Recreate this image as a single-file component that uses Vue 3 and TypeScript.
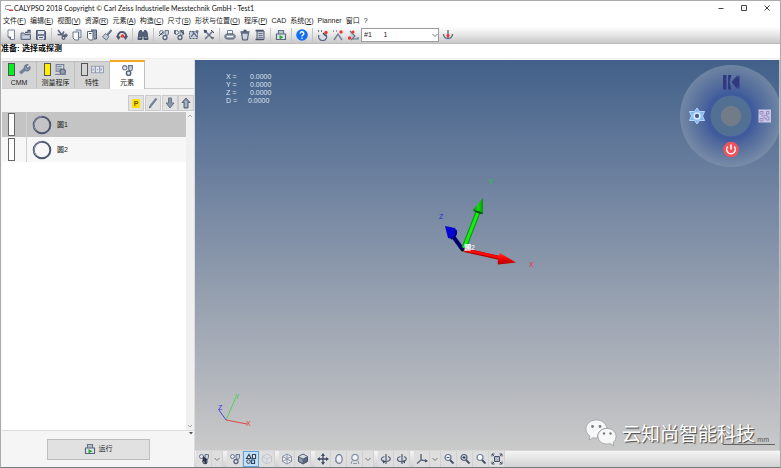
<script setup lang="ts">
import { ref } from 'vue'

interface MenuEntry {
  label: string
  key?: string
}

interface Tool {
  icon: string
  label: string
}

const menus: MenuEntry[] = [
  { label: '文件', key: 'F' },
  { label: '编辑', key: 'E' },
  { label: '视图', key: 'V' },
  { label: '资源', key: 'R' },
  { label: '元素', key: 'A' },
  { label: '构造', key: 'C' },
  { label: '尺寸', key: 'S' },
  { label: '形状与位置', key: 'O' },
  { label: '程序', key: 'P' },
  { label: 'CAD' },
  { label: '系统', key: 'X' },
  { label: 'Planner' },
  { label: '窗口' },
  { label: '?' },
]

const cluster =
  '<circle cx="3.5" cy="3.5" r="2" fill="#e4e8ee" stroke="#69758c"/><path d="M7 1.5h3.500v3a1.750 1.750 0 0 1-3.500 0z" fill="#c9d0db" stroke="#69758c"/><circle cx="7" cy="8.500" r="2" fill="#e4e8ee" stroke="#59657d" stroke-width="1.300"/>'

const icons: Record<string, string> = {
  page: '<path d="M3 1h6.500v9.500H5.500L3 8z" fill="#fafbfc" stroke="#7c869a"/><path d="M3 8h2.500v2.500" fill="#9aa4b5" stroke="#5c677e"/>',
  open: '<path d="M1 4h3l1 1.500h5.500v5H1z" fill="#aeb8c7" stroke="#5f6b82"/><path d="M5 3.500h3V1.500h2v3" fill="none" stroke="#4c5870" stroke-width="1.300"/><path d="M3 8h6" stroke="#eef1f5"/>',
  save: '<path d="M1.500 1.500h8l1 1v8h-9z" fill="#73809a" stroke="#4c5870"/><path d="M3 2h6v3H3zM3 7h6v3.500H3z" fill="#e3e7ed"/><path d="M4 8.500h4" stroke="#4c5870"/>',
  cut: '<path d="M2 1l4 5 5 1M1.500 5.500L6 6l2-3.500" fill="none" stroke="#5c6880" stroke-width="1.600"/><circle cx="7.500" cy="8.800" r="1.500" fill="none" stroke="#4c5870" stroke-width="1.200"/><circle cx="10" cy="6.200" r="1.200" fill="none" stroke="#4c5870"/>',
  copy: '<path d="M4.500 1h5.500v7.500H8" fill="#d8dde5" stroke="#75819a"/><path d="M2 3h5.500v8H4L2 9z" fill="#fafbfc" stroke="#6a768d"/>',
  paste: '<path d="M5 1h5.500v9H8" fill="#8d98ac" stroke="#4c5870"/><path d="M1.500 2.500H7V11H3.500l-2-2z" fill="#fafbfc" stroke="#59657d"/><path d="M3 4.500h2.500" stroke="#4c5870"/>',
  brush: '<path d="M10.500 1L6 6.500" stroke="#69758c" stroke-width="2"/><path d="M4.500 4.500l3.500 3-2.500 3.500L1.500 8z" fill="#c4cbd7" stroke="#69758c"/>',
  undo: '<path d="M2 9A4.300 4.300 0 1 1 10 9" fill="none" stroke="#4c5870" stroke-width="2"/><path d="M0 7l2.500 4L5 7.500z" fill="#4c5870"/><path d="M7 7.500L9.500 11 12 7z" fill="#4c5870"/><circle cx="6.500" cy="7" r="1.800" fill="#ef3434"/>',
  find: '<path d="M2 3l1-1.500h1.500L5.500 4h1l1-2.500H9L10 3l1 7.500H7V7H5v3.500H1z" fill="#56627c" stroke="#46526a"/><path d="M2.500 8.500h1.500M8 8.500h1.500" stroke="#aeb8c7"/>',
  probe: cluster + '<path d="M1 7l4-4" stroke="#46526a"/>',
  probe2: cluster + '<path d="M8 2l3 3M2 1v4" stroke="#3f4b64" stroke-width="1.300"/>',
  pattern: '<path d="M1.500 2.500h8v7h-8z" fill="#c9d0db" stroke="#59657d" stroke-dasharray="2 1"/><path d="M3 8l3-4 3 4M4 2l5 6" fill="none" stroke="#59657d" stroke-width="1.100"/><circle cx="9" cy="2.500" r="1.500" fill="#69758c"/>',
  wrench: '<path d="M2 2l8 8M10 2L2 10" stroke="#69758c" stroke-width="1.600"/><path d="M1 1l3 1-2 2zM8 1l3 3M8.500 8.500L11 9" stroke="#46526a" fill="#46526a"/>',
  print: '<path d="M3.500 1.500h5V5h-5z" fill="#f5f7f9" stroke="#75819a"/><path d="M2.500 5h7l1.500 1.500v2L9.500 10h-7L1 8.500v-2z" fill="#919caf" stroke="#4c5870"/><path d="M3 7.500h6" stroke="#f5f7f9" stroke-width="1.300"/>',
  bin: '<path d="M2.500 4h7l-1 7h-5z" fill="#aeb8c7" stroke="#4c5870"/><path d="M1.500 3h9M4.500 1.500h3" stroke="#4c5870" stroke-width="1.400"/><path d="M5 5v4.500M7 5v4.500" stroke="#f0f2f5"/>',
  scroll: '<path d="M3 2h7v8.500H3z" fill="#c4cbd7" stroke="#4c5870"/><path d="M1.500 1.500h8M1.500 10.500h8" stroke="#46526a" stroke-width="1.300"/><path d="M4.500 4.500h4M4.500 6.500h4M4.500 8.500h4" stroke="#69758c"/>',
  run: '<path d="M3.500 5V1.500h5V5" fill="none" stroke="#69758c" stroke-width="1.200"/><path d="M5 2v3M7 2v3" stroke="#919caf"/><path d="M1.500 5h9v5.500h-9z" fill="#e3e7ed" stroke="#59657d" stroke-width="1.200"/><path d="M4.500 6l4 2.300-4 2.300z" fill="#24a83a"/>',
  help: '<circle cx="6" cy="6" r="5.800" fill="#146ff0"/><path d="M4.200 4.600a1.800 1.800 0 1 1 2.600 1.600q-.8.400-.8 1.200" fill="none" stroke="#fff" stroke-width="1.400"/><circle cx="6" cy="9.200" r=".8" fill="#fff"/>',
  axisA: '<path d="M2 6a4 4 0 1 0 7-.500" fill="#d9dee6" stroke="#59657d" stroke-width="1.200"/><path d="M1 2h1M4 2h1M6 4l3 3" stroke="#3f4b64" stroke-width="1.600"/><circle cx="9" cy="3.500" r="1.700" fill="#ef3434"/>',
  axisB: '<path d="M2 11l4-6 4 6M1 2h1M4 2h1" fill="none" stroke="#75819a" stroke-width="1.500"/><circle cx="9" cy="3" r="1.700" fill="#ef3434"/>',
  axisC: '<path d="M3 2l5 5-4 4M5 10h6V8" fill="#c4cbd7" stroke="#69758c" stroke-width="1.200"/><circle cx="6" cy="3" r="1.500" fill="#ef3434"/><circle cx="2.500" cy="9" r="1.700" fill="#ef3434"/>',
  touch: '<path d="M1.500 5a4.500 4.500 0 0 0 9 0M6 1v8" fill="none" stroke="#69758c" stroke-width="1.500"/><circle cx="6" cy="6.500" r="1.600" fill="#ef3434"/>',
  spanner: '<path d="M2 9.500L6.500 5.500" stroke="#75819a" stroke-width="3"/><path d="M6 5.500a3 3 0 0 1 3-4L7.500 3.500 9 5l2-1.500a3 3 0 0 1-4 3.500z" fill="#919caf" stroke="#69758c"/>',
  plan: '<path d="M2 1.500h7v6H2z" fill="#d9dee6" stroke="#75819a"/><path d="M3 3.500h4M3 5.500h4" stroke="#69758c"/><circle cx="8" cy="8" r="2.500" fill="#919caf" stroke="#59657d"/><path d="M1 10.500h10" stroke="#75819a"/>',
  traits: '<path d="M.5 3h11v6H.5z" fill="#e3e7ed" stroke="#9aa4b5"/><path d="M4 3v6M8 3v6M2 5v2M5.500 6h1M9.500 5v2" stroke="#8b96aa"/>',
  cluster,
  pick: cluster + '<path d="M5 3l5 4-2 .5 1 3-2 .5-1-3-1.500 1z" fill="#29344e"/>',
  marks: '<path d="M1.500 5.500L4 1.500l2 4zM7.500 1.500h3v4h-3z" fill="#f4f7fa" stroke="#344561" stroke-width="1.200"/><circle cx="3.500" cy="8.500" r="1.800" fill="none" stroke="#344561"/><path d="M6.500 7h3v3.500h-3z" fill="none" stroke="#344561" stroke-width="1.200"/>',
  ghost: '<path d="M6 1l4.500 2.500v5L6 11 1.500 8.500v-5zM1.500 3.500L6 6l4.500-2.500M6 6v5" fill="#dfe1e4" stroke="#c2c6cc"/>',
  wire: '<path d="M6 1l4.500 2.500v5L6 11 1.500 8.500v-5zM1.500 3.500L6 6l4.500-2.500M6 6v5M6 1v5M1.500 8.500L6 6l4.500 2.500" fill="#eef0f3" stroke="#8b96aa"/>',
  cube: '<path d="M6 1l4.500 2.500v5L6 11 1.500 8.500v-5z" fill="#58657e" stroke="#46526a"/><path d="M6 1.500L10 3.500 6 5.500 2 3.500z" fill="#d5dae3"/><path d="M2 4.500l3.500 2v3.500L2 8z" fill="#8f9aae"/>',
  move: '<path d="M6 1v10M1 6h10" stroke="#3f4b64" stroke-width="1.300"/><path d="M6 0L4 3h4zM6 12L4 9h4zM0 6l3-2v4zM12 6L9 4v4z" fill="#3f4b64"/>',
  rotate: '<ellipse cx="6" cy="6" rx="3.200" ry="4.500" fill="#f0f2f5" stroke="#75819a" stroke-width="1.300"/><path d="M2 8q3 4 7 1" fill="none" stroke="#919caf"/>',
  person: '<circle cx="6" cy="4.500" r="3.200" fill="#f0f2f5" stroke="#8b96aa" stroke-width="1.300"/><path d="M3 8l-1 3M9 8l1 3M4 10.500h4" stroke="#8b96aa"/>',
  turnL: '<path d="M6 1v10" stroke="#59657d" stroke-width="1.300"/><path d="M4.500 3.500C-.500 5 1 9 6 8.500S11.500 5 8 3.500" fill="none" stroke="#59657d" stroke-width="1.200"/><path d="M3 7l3 1.500-3 2z" fill="#46526a"/>',
  turnR: '<path d="M6 1v10" stroke="#59657d" stroke-width="1.300"/><path d="M4.500 3.500C-.500 5 1 9 6 8.500S11.500 5 8 3.500" fill="none" stroke="#59657d" stroke-width="1.200"/><path d="M9 7L6 8.500l3 2z" fill="#46526a"/>',
  axes: '<path d="M5 1v6l6 1M5 7l-4 3.500" fill="none" stroke="#59657d" stroke-width="1.400"/><path d="M9 6l3 2-3 1.500z" fill="#46526a"/>',
  zoomOut: '<circle cx="5" cy="4.500" r="3" fill="#f0f2f5" stroke="#69758c" stroke-width="1.200"/><path d="M7 7l3.500 3.500" stroke="#46526a" stroke-width="1.800"/><path d="M3.500 4.500h3" stroke="#46526a"/>',
  zoomIn: '<circle cx="5" cy="4.500" r="3" fill="#c4cbd7" stroke="#59657d" stroke-width="1.200"/><path d="M7 7l3.500 3.500" stroke="#46526a" stroke-width="1.800"/><path d="M3.500 4.500h3M5 3v3" stroke="#35415a"/>',
  zoom: '<circle cx="5" cy="4.500" r="3" fill="#fafbfc" stroke="#75819a" stroke-width="1.200"/><path d="M7 7l3.500 3.500" stroke="#46526a" stroke-width="1.800"/>',
  fit: '<path d="M3.500 3.500h5v5h-5z" fill="#aeb8c7" stroke="#46526a"/><path d="M1 3.500V1h2.500M8.500 1H11v2.500M11 8.500V11H8.500M3.500 11H1V8.500M1 1l2 2M11 1L9 3M11 11L9 9M1 11l2-2" fill="none" stroke="#46526a"/>',
  pencil: '<path d="M9.500 1.500L3.500 9" stroke="#75819a" stroke-width="2.200"/><path d="M4.500 10L2 11.500l.500-3z" fill="#46526a"/>',
  down: '<path d="M4.500 1h3v5h2.500L6 11 2 6h2.500z" fill="#8b96aa" stroke="#69758c"/>',
  up: '<path d="M4 11h4V5.500h2L6 1 2 5.500h2z" fill="#8b96aa" stroke="#59657d"/><path d="M6 4v6" stroke="#c9d0db"/>',
}

const toolGroups: Tool[][] = [
  [{ icon: 'page', label: '新建' }, { icon: 'open', label: '打开' }, { icon: 'save', label: '保存' }],
  [
    { icon: 'cut', label: '剪切' },
    { icon: 'copy', label: '复制' },
    { icon: 'paste', label: '粘贴' },
    { icon: 'brush', label: '格式' },
    { icon: 'undo', label: '重置' },
  ],
  [{ icon: 'find', label: '查找' }],
  [
    { icon: 'probe', label: '探测' },
    { icon: 'probe2', label: '定义元素' },
    { icon: 'pattern', label: '阵列' },
    { icon: 'wrench', label: '设置' },
  ],
  [{ icon: 'print', label: '打印' }, { icon: 'bin', label: '删除' }, { icon: 'scroll', label: '报告' }],
  [{ icon: 'run', label: '运行程序' }],
  [{ icon: 'help', label: '帮助' }],
  [{ icon: 'axisA', label: '探针' }, { icon: 'axisB', label: '探针系统' }, { icon: 'axisC', label: '更换探针' }],
]

const viewGroups: Tool[][] = [
  [{ icon: 'pick', label: '选择' }, { icon: 'chevron', label: '选择选项' }],
  [{ icon: 'cluster', label: '显示元素' }, { icon: 'marks', label: '标记元素' }, { icon: 'ghost', label: '隐藏模型' }],
  [{ icon: 'wire', label: '线框' }, { icon: 'cube', label: '实体' }],
  [
    { icon: 'move', label: '平移' },
    { icon: 'rotate', label: '旋转' },
    { icon: 'person', label: '视角' },
    { icon: 'chevron', label: '视角选项' },
  ],
  [{ icon: 'turnL', label: '左转' }, { icon: 'turnR', label: '右转' }],
  [
    { icon: 'axes', label: '坐标系' },
    { icon: 'chevron', label: '坐标系选项' },
    { icon: 'zoomOut', label: '缩小' },
    { icon: 'zoomIn', label: '放大' },
    { icon: 'zoom', label: '缩放' },
    { icon: 'fit', label: '适合窗口' },
  ],
]

const tabs = [
  { name: 'CMM', icon: 'spanner', lamp: 'green', size: 'mid' },
  { name: '测量程序', icon: 'plan', lamp: 'yellow', size: 'wide' },
  { name: '特性', icon: 'traits', lamp: 'off', size: 'mid' },
  { name: '元素', icon: 'cluster', lamp: '', size: 'mid' },
]

const features = ['圆1', '圆2']
const coords = [
  { axis: 'X', value: '0.0000' },
  { axis: 'Y', value: '0.0000' },
  { axis: 'Z', value: '0.0000' },
  { axis: 'D', value: '0.0000' },
]

const activeTab = ref('元素')
const selected = ref('圆1')
const activeView = ref('marks')
</script>

<template>
  <div class="window">
    <header class="titlebar">
      <svg class="logo" viewBox="0 0 8 8" aria-hidden="true">
        <path d="M6 1.500H2A1.500 1.500 0 0 0 2 5.500H4" fill="none" stroke="#8a8f98" />
        <path d="M4 5.500h4v1.500H4z" fill="#d9363e" />
      </svg>
      <h1>CALYPSO 2018 Copyright © Carl Zeiss Industrielle Messtechnik GmbH - Test1</h1>
      <div class="caption">
        <button aria-label="最小化"><svg viewBox="0 0 8 8"><path d="M1.500 4.500h5" /></svg></button>
        <button aria-label="最大化"><svg viewBox="0 0 8 8"><path d="M1.500 1.500h5v5h-5z" /></svg></button>
        <button aria-label="关闭"><svg viewBox="0 0 8 8"><path d="M1.500 1.500l5 5M6.500 1.500l-5 5" /></svg></button>
      </div>
    </header>

    <nav class="menu">
      <button v-for="m in menus" :key="m.label">{{ m.label }}<template v-if="m.key">(<u>{{ m.key }}</u>)</template></button>
    </nav>

    <div class="toolbar">
      <div v-for="(group, i) in toolGroups" :key="i" class="group">
        <button v-for="t in group" :key="t.icon" :aria-label="t.label">
          <svg class="icon" viewBox="0 0 12 12" v-html="icons[t.icon]"></svg>
        </button>
      </div>
      <div class="picker">
        <select aria-label="探针选择">
          <option>#1&nbsp;&nbsp;&nbsp;&nbsp;&nbsp;&nbsp;1</option>
        </select>
        <svg class="arrow" viewBox="0 0 8 8" aria-hidden="true"><path d="M1.500 3L4 5.500 6.500 3" /></svg>
      </div>
      <button class="last" aria-label="触测">
        <svg class="icon" viewBox="0 0 12 12" v-html="icons.touch"></svg>
      </button>
    </div>

    <p class="prompt">准备: 选择或探测</p>

    <main>
      <aside>
        <div class="tabs" role="tablist">
          <button
            v-for="t in tabs"
            :key="t.name"
            role="tab"
            :aria-selected="activeTab === t.name"
            :class="[t.size, { active: activeTab === t.name }]"
            @click="activeTab = t.name"
          >
            <span class="tab-top">
              <i v-if="t.lamp" class="lamp" :class="t.lamp"></i>
              <svg class="tab-icon" viewBox="0 0 12 12" v-html="icons[t.icon]"></svg>
            </span>
            <span>{{ t.name }}</span>
          </button>
        </div>

        <div class="actions">
          <button aria-label="参数"><b>P</b></button>
          <button aria-label="编辑"><svg class="icon" viewBox="0 0 12 12" v-html="icons.pencil"></svg></button>
          <div class="pair">
            <button aria-label="下移"><svg class="icon" viewBox="0 0 12 12" v-html="icons.down"></svg></button>
            <button aria-label="上移"><svg class="icon" viewBox="0 0 12 12" v-html="icons.up"></svg></button>
          </div>
        </div>

        <div class="list">
          <ul>
            <li v-for="f in features" :key="f">
              <button :class="{ selected: selected === f }" @click="selected = f">
                <span class="gutter"><i></i></span>
                <svg class="ring" viewBox="0 0 20 20" aria-hidden="true">
                  <circle cx="10" cy="10" r="8.300" fill="none" stroke="#4d5773" stroke-width="2" />
                  <path d="M4 15.500A8.300 8.300 0 0 1 10 1.700" fill="none" stroke="#8b94ab" />
                </svg>
                <span>{{ f }}</span>
              </button>
            </li>
          </ul>
          <div class="scroll">
            <svg viewBox="0 0 8 8"><path d="M2 5l2-2 2 2" /></svg>
            <svg viewBox="0 0 8 8"><path d="M2 3l2 2 2-2" /></svg>
          </div>
        </div>

        <footer>
          <svg class="drop" viewBox="0 0 6 4" aria-hidden="true"><path d="M1 1h4L3 3.500z" fill="#555" /></svg>
          <button class="run">
            <svg class="icon" viewBox="0 0 12 12" v-html="icons.run"></svg>
            运行
          </button>
        </footer>
      </aside>

      <section class="cad">
        <div class="viewport">
          <dl class="readout">
            <div v-for="c in coords" :key="c.axis" :class="{ dist: c.axis === 'D' }">
              <dt>{{ c.axis }} =</dt>
              <dd>{{ c.value }}</dd>
            </div>
          </dl>

          <svg class="scene" viewBox="0 0 584 390" preserveAspectRatio="xMinYMin meet" aria-label="坐标轴">
            <defs>
              <linearGradient id="red" x1="0" y1="0" x2="0" y2="1">
                <stop offset="0" stop-color="#ff3a2e" />
                <stop offset=".5" stop-color="#f60000" />
                <stop offset="1" stop-color="#a80000" />
              </linearGradient>
              <linearGradient id="green" x1="0" y1="0" x2="1" y2="0">
                <stop offset="0" stop-color="#067a06" />
                <stop offset=".5" stop-color="#10e010" />
                <stop offset="1" stop-color="#0a8f0a" />
              </linearGradient>
            </defs>
            <path d="M268 190L257 175" stroke="#00006f" stroke-width="4" />
            <path d="M250 166l10 2 2 4-1 4-4 3-4-1z" fill="#0505d2" />
            <path d="M261 170q2 5-5 9" fill="none" stroke="#00007c" stroke-width="1.500" />
            <path d="M269 188l14-36" stroke="#0a960a" stroke-width="5" />
            <path d="M269 188l14-36" stroke="#14ee14" stroke-width="3" />
            <path d="M288 138L278 150q4 4 10 4z" fill="url(#green)" />
            <path d="M278 150q4 4 10 4-1-3-10-4z" fill="#045204" />
            <path d="M269 190l36 8" stroke="#b00000" stroke-width="4" />
            <path d="M269 189.500l36 8" stroke="#ff0808" stroke-width="2.500" />
            <path d="M321 202.500L305 193q-3 6-2 11.500z" fill="url(#red)" />
            <path d="M267 191l3-3" stroke="#111" stroke-width="2" />
            <path d="M270 184h6v6h-6z" fill="#fff" opacity=".5" />
            <g class="axis-labels">
              <text x="294" y="124" fill="#12d02c">Y</text>
              <text x="244" y="159" fill="#1a2fe0">Z</text>
              <text x="334" y="207" fill="#f0303a">X</text>
              <text x="269" y="190" fill="#ffffff">圆2</text>
            </g>
            <g fill="none">
              <path d="M31 360L41 337" stroke="#4fd35c" />
              <path d="M31 360L24 350" stroke="#4a4ad6" />
              <path d="M31 360L52 364" stroke="#e0454b" />
            </g>
            <g class="axis-labels">
              <text x="40" y="339" fill="#2fd040">Y</text>
              <text x="23" y="350" fill="#3535dd">Z</text>
              <text x="51" y="366" fill="#e8353d">X</text>
            </g>
          </svg>

          <svg class="wheel" viewBox="0 0 102 102" aria-label="快捷轮盘">
            <defs>
              <radialGradient id="disc">
                <stop offset="0" stop-color="#3f5a9c" />
                <stop offset=".45" stop-color="#405b9d" />
                <stop offset=".72" stop-color="#5b73a0" stop-opacity=".8" />
                <stop offset="1" stop-color="#8093ad" stop-opacity=".7" />
              </radialGradient>
            </defs>
            <circle cx="51" cy="51" r="51" fill="url(#disc)" />
            <circle cx="51" cy="51" r="20.500" fill="#527094" />
            <circle cx="51" cy="51" r="10.300" fill="#717c88" />
            <path d="M43 10h3.500v14.500H43zM48 10h3.500l-2 7 2 7.500H48zM51.500 17l6-7v14.500zM59.500 10v14.500l-5-7.300z" fill="#303a80" />
            <path d="M17 43l2.500 3.500h5L22.500 51l2 4.500h-5L17 59l-2.500-3.500h-5l2-4.500-2-4.500h5z" fill="#80b3f2" stroke="#b8d8fb" />
            <circle cx="17" cy="51" r="5" fill="#9ac6f7" />
            <circle cx="17" cy="51" r="2.800" fill="#405c92" stroke="#e6f2ff" stroke-width="1.300" />
            <path d="M78.500 44.500h12.500v13H78.500z" fill="#ccc8e4" />
            <path d="M80 46.500h3v2.500h-3zM86.500 46.500H89V49h-2.500zM80 53.500h3V56h-3zM84 50h3v2h2v3h-3v-2h-2zM81 51h2" fill="none" stroke="#8d7db9" stroke-width=".8" />
            <circle cx="51" cy="84.500" r="7.800" fill="#f0525c" />
            <path d="M47.800 81.500a4.300 4.300 0 1 0 6.400 0M51 79.500v5" fill="none" stroke="#fff" stroke-width="1.500" />
          </svg>

          <div class="scale">mm</div>
          <div class="brand">
            <svg viewBox="0 0 32 28" aria-hidden="true">
              <g stroke="#8a8e92" stroke-width=".6" fill="#f7f7f7">
                <path d="M11.500 1C5 1 1 5.200 1 10c0 3 1.500 5.300 4 7l-1 4 4-2.300c1.500.4 3 .5 4.500.3C12 14 16 9 22 9.300 21 4.200 16.500 1 11.500 1z" />
                <path d="M22 9.500c-5.200 0-9 3.500-9 7.800s3.800 7.700 9 7.700c1.200 0 2.300-.2 3.300-.5L29 27l-1-3.500c2-1.500 3-3.600 3-6.200 0-4.300-3.800-7.800-9-7.800z" />
              </g>
              <g fill="#777b80"><circle cx="7.500" cy="7.500" r="1.400" /><circle cx="15" cy="7.500" r="1.400" /><circle cx="19" cy="14.500" r="1.200" /><circle cx="25.500" cy="14.500" r="1.200" /></g>
            </svg>
            <span>云知尚智能科技</span>
          </div>
        </div>

        <div class="viewbar">
          <div v-for="(group, i) in viewGroups" :key="i" class="vgroup">
            <button
              v-for="t in group"
              :key="t.label"
              :aria-label="t.label"
              :class="{ on: activeView === t.icon, chev: t.icon === 'chevron' }"
              @click="activeView = t.icon"
            >
              <svg v-if="t.icon === 'chevron'" class="arrow" viewBox="0 0 8 8"><path d="M1.500 3L4 5.500 6.500 3" /></svg>
              <svg v-else class="icon" viewBox="0 0 12 12" v-html="icons[t.icon]"></svg>
            </button>
          </div>
        </div>
      </section>
    </main>
  </div>
</template>

<style>
body {
  margin: 0;
  overflow: hidden;
}
</style>

<style scoped>
* {
  box-sizing: border-box;
}

.window {
  display: flex;
  flex-direction: column;
  height: 100vh;
  border: 1px solid #a9abae;
  border-bottom-color: #77797c;
  background: #fff;
  color: #222;
  font: 7px/10px "Liberation Sans", "Noto Sans CJK SC", sans-serif;
}

button {
  display: flex;
  align-items: center;
  justify-content: center;
  margin: 0;
  padding: 0;
  border: 0;
  background: none;
  color: inherit;
  font: inherit;
}

svg {
  display: block;
  flex: none;
}

.icon {
  width: 12px;
  height: 12px;
}

.titlebar {
  display: flex;
  align-items: center;
  height: 14px;
  padding: 0 2px 0 4px;
}

.logo {
  width: 8px;
  height: 8px;
  margin-right: 1px;
}

h1 {
  flex: 1;
  margin: 0;
  font: 400 7px/12px Lato, sans-serif;
  color: #111;
}

.caption {
  display: flex;
}

.caption button {
  width: 23px;
  height: 12px;
}

.caption svg {
  width: 8px;
  height: 8px;
  fill: none;
  stroke: #444;
}

.menu {
  display: flex;
  align-items: center;
  gap: 4px;
  height: 12px;
  padding-left: 2px;
  white-space: nowrap;
}

.menu u {
  text-underline-offset: 1px;
}

.toolbar {
  display: flex;
  align-items: center;
  height: 17px;
  padding-left: 2px;
  border-bottom: 1px solid #bdbdbd;
  background: linear-gradient(#fdfdfd, #e6e6e6 50%, #c8c8c8);
}

.group {
  display: flex;
  align-items: center;
  padding-right: 3px;
  margin-right: 2px;
  border-right: 1px solid #c4c4c4;
}

.group:nth-last-child(3) {
  margin-right: 0;
  padding-right: 0;
  border: 0;
}

.group button {
  width: 15px;
  height: 14px;
}

.picker {
  display: grid;
  width: 78px;
  height: 14px;
  margin-left: 1px;
}

.picker > * {
  grid-area: 1 / 1;
}

.picker select {
  width: 100%;
  height: 100%;
  padding: 0 2px;
  border: 1px solid #9c9c9c;
  border-radius: 0;
  appearance: none;
  background: #fff;
  color: #222;
  font: 7px/10px "Liberation Sans", sans-serif;
}

.arrow {
  width: 8px;
  height: 8px;
  fill: none;
  stroke: #777;
}

.picker .arrow {
  place-self: center end;
  pointer-events: none;
}

.last {
  width: 17px;
}

.prompt {
  height: 15px;
  margin: 0;
  border-bottom: 1px solid #f0f0f0;
  color: #000;
  font: 700 8px/10px "Liberation Sans", "Noto Sans CJK SC", sans-serif;
}

main {
  display: flex;
  flex: 1;
  min-height: 0;
  background: #f5f5f5;
}

aside {
  display: flex;
  flex-direction: column;
  width: 194px;
  padding-left: 1px;
  border-right: 1px solid #dcdcdc;
}

.tabs {
  display: flex;
  align-items: flex-end;
  height: 30px;
  border-bottom: 1px solid #cfcfcf;
}

.tabs button {
  flex-direction: column;
  gap: 1px;
  height: 27px;
  border: 1px solid #bebebe;
  border-width: 1px 1px 0 0;
  background: #d4d4d4;
}

.tabs .mid {
  width: 35px;
}

.tabs .wide {
  width: 38px;
}

.tabs .active {
  height: 29px;
  margin-bottom: -1px;
  border-top: 2px solid #f5a623;
  background: #fff;
}

.tab-top {
  display: flex;
  align-items: center;
  gap: 3px;
  height: 14px;
}

.lamp {
  width: 7px;
  height: 13px;
  border: 1px solid #555;
}

.green {
  background: #00f020;
}

.yellow {
  background: #ffee00;
}

.tab-icon {
  width: 13px;
  height: 13px;
}

.actions {
  display: flex;
  justify-content: flex-end;
  align-items: flex-end;
  gap: 1px;
  height: 23px;
  padding-bottom: 1px;
}

.actions button {
  width: 16px;
  height: 16px;
  border: 1px solid #cbcbcb;
  background: #e2e2e2;
}

.actions b {
  width: 8px;
  border-radius: 1px;
  background: #ffe000;
  color: #6b5a00;
  font: 700 7px/9px "Liberation Sans", sans-serif;
}

.pair {
  display: flex;
}

.list {
  display: flex;
  flex: 1;
  border-bottom: 1px solid #dedede;
}

ul {
  flex: 1;
  margin: 0;
  padding: 0;
  list-style: none;
  background: #fff;
}

li button {
  justify-content: flex-start;
  width: 100%;
  height: 25px;
  background: #f7f7f7;
}

li .selected {
  background: #c4c4c4;
}

.gutter {
  display: flex;
  align-items: center;
  width: 25px;
  height: 25px;
  padding-left: 6px;
  border-right: 1px solid #cfcfcf;
}

.gutter i {
  width: 7px;
  height: 23px;
  border: 1px solid #666;
  background: #fff;
}

.ring {
  width: 20px;
  height: 20px;
  margin: 0 5px;
}

.scroll {
  display: flex;
  flex-direction: column;
  justify-content: space-between;
  width: 8px;
  background: #f0f0f0;
}

.scroll svg {
  width: 8px;
  height: 8px;
  fill: none;
  stroke: #aaa;
}

footer {
  display: grid;
  height: 36px;
}

footer > * {
  grid-area: 1 / 1;
}

.drop {
  width: 6px;
  height: 4px;
  justify-self: end;
}

.run {
  place-self: center;
  gap: 3px;
  width: 103px;
  height: 21px;
  border: 1px solid #bdbdbd;
  background: #e1e1e1;
}

.cad {
  display: flex;
  flex: 1;
  flex-direction: column;
  min-width: 0;
  padding-top: 1px;
}

.viewport {
  position: relative;
  flex: 1;
  overflow: hidden;
  border-right: 1px solid #b9c0ca;
  background: linear-gradient(#426089, #697e9d 28%, #929dae 58%, #b7babf 86%, #cacaca);
}

.readout {
  position: absolute;
  top: 13px;
  left: 31px;
  margin: 0;
  color: #dde4ee;
  font: 7px/8px "Liberation Sans", sans-serif;
}

.readout div {
  display: flex;
}

.readout dt {
  width: 24px;
}

.readout .dist dt {
  width: 22px;
}

.readout dd {
  margin: 0;
}

.scene {
  position: absolute;
  inset: 0;
  width: 100%;
  height: 100%;
}

.axis-labels {
  font: 7px "Liberation Sans", "Noto Sans CJK SC", sans-serif;
}

.wheel {
  position: absolute;
  top: 5px;
  right: -3px;
  width: 102px;
  height: 102px;
}

.scale {
  position: absolute;
  right: 4px;
  bottom: 5px;
  width: 52px;
  padding-right: 6px;
  border-bottom: 1px solid #666;
  color: #555;
  font: 7px/8px "Liberation Sans", sans-serif;
  text-align: right;
}

.brand {
  position: absolute;
  right: 24px;
  bottom: 3px;
  display: flex;
  align-items: center;
  gap: 5px;
  color: #fff;
  font: 19px/28px "Noto Sans CJK SC", sans-serif;
  text-shadow: 1px 1px 1px #444;
  white-space: nowrap;
}

.brand svg {
  width: 32px;
  height: 28px;
}

.viewbar {
  display: flex;
  height: 17px;
  padding-left: 1px;
  border-top: 1px solid #d6d6d6;
  background: linear-gradient(#f4f4f4, #d2d2d2);
}

.vgroup {
  display: flex;
  margin-right: 4px;
  background: #dedede;
}

.vgroup button {
  width: 16px;
  border-right: 1px solid #d2d2d2;
}

.vgroup .chev {
  width: 11px;
}

.vgroup .on {
  border: 1px solid #5ea3dc;
  background: #c5e1f8;
}
</style>
